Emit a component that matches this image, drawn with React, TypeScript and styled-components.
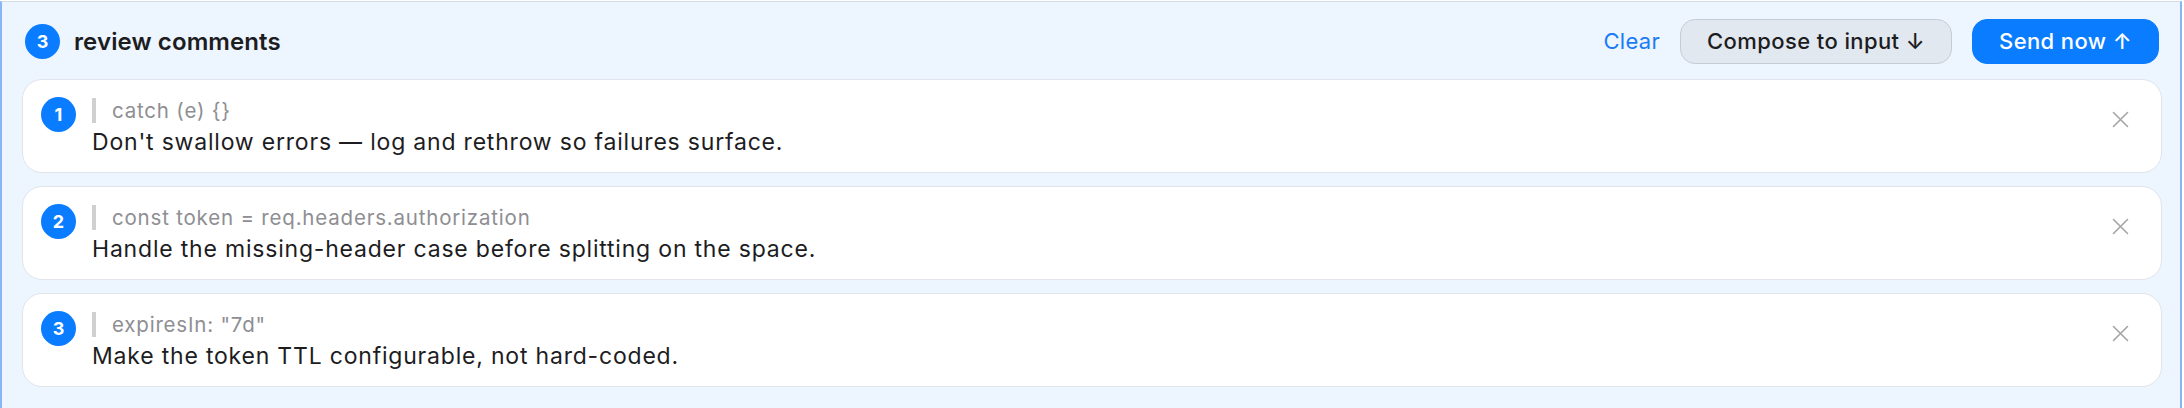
import React from "react";
import styled, { createGlobalStyle } from "styled-components";

const GlobalStyle = createGlobalStyle`
  html, body {
    margin: 0;
    padding: 0;
    background: #ffffff;
  }
  body {
    font-family: Inter, "Liberation Sans", sans-serif;
    -webkit-font-smoothing: antialiased;
  }
`;

const Colors = {
  blue: "#0a7cff",
  text: "#1d1d1f",
  muted: "#8e8e93",
  panel: "#edf5ff",
};

const Panel = styled.section`
  box-sizing: border-box;
  width: 2182px;
  margin-top: 1px;
  min-height: 420px;
  background: ${Colors.panel};
  border-top: 1px solid #d3dbe6;
  border-left: 2px solid #88b6f4;
  border-right: 2px solid #88b6f4;
  padding: 0 18px 21px 20px;
`;

const Header = styled.header`
  display: flex;
  align-items: center;
  height: 46px;
  padding: 16px 3px 15px 3px;
`;

const Title = styled.div`
  display: flex;
  align-items: center;
  gap: 14px;
  flex: 1;
  font-size: 24px;
  font-weight: 600;
  letter-spacing: 0.1px;
  color: ${Colors.text};
`;

const Badge = styled.span<{ size: number }>`
  display: inline-flex;
  align-items: center;
  justify-content: center;
  flex: none;
  width: ${(p) => p.size}px;
  height: ${(p) => p.size}px;
  border-radius: 50%;
  background: ${Colors.blue};
  color: #ffffff;
  font-size: 18px;
  font-weight: 700;
`;

const Actions = styled.div`
  display: flex;
  align-items: center;
  gap: 20px;
`;

const LinkButton = styled.button`
  border: none;
  background: none;
  padding: 0;
  font: inherit;
  font-size: 22px;
  letter-spacing: 0.3px;
  color: #1a7cf5;
  cursor: pointer;
`;

const PillButton = styled.button<{ primary?: boolean }>`
  box-sizing: border-box;
  height: 45px;
  padding: 0 26px;
  border-radius: 15px;
  font: inherit;
  font-size: 22px;
  font-weight: 500;
  letter-spacing: 0.4px;
  cursor: pointer;
  border: 1px solid ${(p) => (p.primary ? Colors.blue : "#c4ccd7")};
  background: ${(p) => (p.primary ? Colors.blue : "#e2e8f0")};
  color: ${(p) => (p.primary ? "#ffffff" : Colors.text)};
`;

const List = styled.div`
  display: flex;
  flex-direction: column;
  gap: 13px;
`;

const Card = styled.article`
  box-sizing: border-box;
  height: 94px;
  display: flex;
  align-items: flex-start;
  gap: 16px;
  padding: 17px 32px 0 18px;
  background: #ffffff;
  border: 1px solid #e1e5eb;
  border-radius: 20px;
`;

const Body = styled.div`
  flex: 1;
  display: flex;
  flex-direction: column;
`;

const Quote = styled.div`
  height: 25px;
  border-left: 4px solid #d0d0d0;
  padding-left: 16px;
  font-size: 20.5px;
  letter-spacing: 0.8px;
  line-height: 25px;
  color: ${Colors.muted};
  margin-top: 1px;
`;

const Comment = styled.div`
  margin-top: 4px;
  font-size: 23px;
  letter-spacing: 0.8px;
  line-height: 30px;
  color: ${Colors.text};
`;

const Close = styled.button`
  border: none;
  background: none;
  padding: 0;
  margin-top: 13px;
  width: 18px;
  height: 18px;
  display: flex;
  align-items: center;
  justify-content: center;
  cursor: pointer;
`;

const CloseIcon = () => (
  <svg width="17" height="17" viewBox="0 0 17 17" fill="none">
    <path d="M1.5 1.5L15.5 15.5M15.5 1.5L1.5 15.5" stroke="#a5a5a5" strokeWidth="1.6" strokeLinecap="round" />
  </svg>
);

const comments = [
  { code: "catch (e) {}", text: "Don't swallow errors — log and rethrow so failures surface." },
  { code: "const token = req.headers.authorization", text: "Handle the missing-header case before splitting on the space." },
  { code: 'expiresIn: "7d"', text: "Make the token TTL configurable, not hard-coded." },
];

export default function App() {
  return (
    <>
      <GlobalStyle />
      <Panel>
        <Header>
          <Title>
            <Badge size={35}>{comments.length}</Badge>
            review comments
          </Title>
          <Actions>
            <LinkButton>Clear</LinkButton>
            <PillButton>Compose to input ↓</PillButton>
            <PillButton primary>Send now ↑</PillButton>
          </Actions>
        </Header>
        <List>
          {comments.map((c, i) => (
            <Card key={i}>
              <Badge size={35}>{i + 1}</Badge>
              <Body>
                <Quote>{c.code}</Quote>
                <Comment>{c.text}</Comment>
              </Body>
              <Close aria-label="Remove">
                <CloseIcon />
              </Close>
            </Card>
          ))}
        </List>
      </Panel>
    </>
  );
}
